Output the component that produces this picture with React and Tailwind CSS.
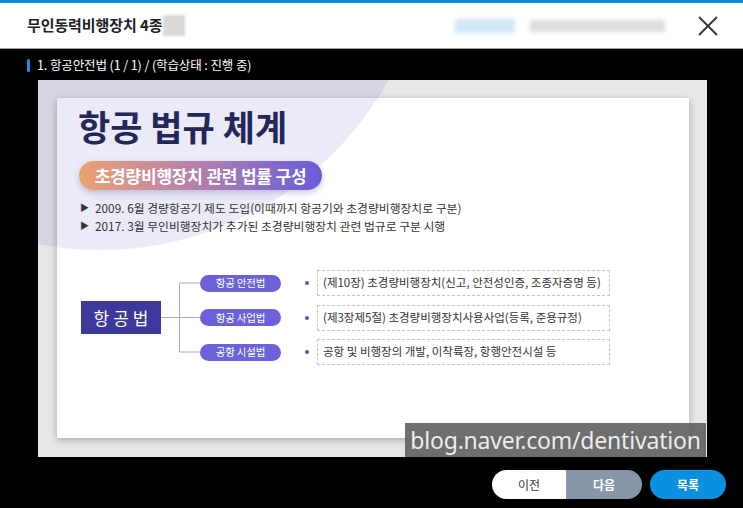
import React from 'react';

const LAWS = [
  { name: '항공 안전법', desc: '(제10장) 초경량비행장치(신고, 안전성인증, 조종자증명 등)' },
  { name: '항공 사업법', desc: '(제3장제5절) 초경량비행장치사용사업(등록, 준용규정)' },
  { name: '공항 시설법', desc: '공항 및 비행장의 개발, 이착륙장, 항행안전시설 등' },
];

const BULLETS = [
  '2009. 6월 경량항공기 제도 도입(이때까지 항공기와 초경량비행장치로 구분)',
  '2017. 3월 무인비행장치가 추가된 초경량비행장치 관련 법규로 구분 시행',
];

function Connector() {
  return (
    <svg width="39" height="95" viewBox="0 0 39 95" className="shrink-0">
      <g stroke="#a9a6dc" strokeWidth="1" fill="none">
        <path d="M0 47.5H39" />
        <path d="M18.5 13V82" />
        <path d="M18.5 13H39" />
        <path d="M18.5 82H39" />
      </g>
    </svg>
  );
}

export default function App() {
  return (
    <div className="w-[743px] h-[508px] bg-black flex flex-col overflow-hidden font-['Noto_Sans_CJK_KR','Noto_Sans',sans-serif]">
      {/* header */}
      <div className="h-[3px] bg-[#0a8ad6]" />
      <header className="h-[46px] bg-white border-b border-[#9c9c9c] flex items-center pl-[27px] pr-[25px]">
        <h1 className="text-[15px] font-bold text-[#222] tracking-[-0.1px]">무인동력비행장치 4종</h1>
        <div className="w-[22px] h-[21px] bg-[#d9d9d9] blur-[1px] ml-[1px]" />
        <div className="ml-auto flex items-center">
          <div className="w-[60px] h-[14px] bg-[#cfe6f5] blur-[2px]" />
          <div className="w-[135px] h-[12px] bg-[#dcdcdc] blur-[2px] ml-[15px]" />
          <svg width="20" height="20" viewBox="0 0 20 20" className="ml-[33px]">
            <path d="M1 1L19 19M19 1L1 19" stroke="#333" strokeWidth="1.8" />
          </svg>
        </div>
      </header>

      {/* lesson title */}
      <div className="h-[31px] flex items-center pl-[27px] pt-[1px]">
        <span className="w-[3px] h-[13px] rounded-full bg-[#1a8fe3]" />
        <span className="ml-[7px] text-white text-[12.5px] tracking-[-0.1px]">1. 항공안전법 (1 / 1) / (학습상태 : 진행 중)</span>
      </div>

      {/* slide */}
      <div className="relative ml-[38px] w-[669px] h-[377px] bg-[#e7e7e8] overflow-hidden pt-[18px] pl-[19px]">
        <div className="absolute left-[-268px] top-[-490px] w-[660px] h-[660px] rounded-full bg-[#d5d6e2]" />
        <div className="relative w-[632px] h-[340px] bg-white overflow-hidden shadow-[0_2px_7px_rgba(0,0,0,0.28)]">
          <div className="absolute left-[-287px] top-[-508px] w-[660px] h-[660px] rounded-full bg-[#eaebf7]" />
          <div className="relative pl-[21px] pt-[8px]">
            <h2 className="text-[35px] leading-[40px] font-bold text-[#24265c]">항공 법규 체계</h2>
            <div className="mt-[15px] ml-[1px] w-[243px] h-[29px] rounded-full bg-gradient-to-r from-[#eba36d] via-[#b27eae] to-[#6a5ad8] flex items-center justify-center shadow-[0_3px_6px_rgba(90,80,160,0.3)]">
              <span className="text-white text-[17px] font-bold tracking-[-0.2px]">초경량비행장치 관련 법률 구성</span>
            </div>
            <ul className="mt-[9px] ml-[2px] text-[11.8px] leading-[18px] text-[#333]">
              {BULLETS.map((b) => (
                <li key={b} className="flex items-center">
                  <span className="text-[9px] mr-[6px] text-[#333]">▶</span>
                  {b}
                </li>
              ))}
            </ul>

            {/* law diagram */}
            <div className="mt-[35px] ml-[3px] flex items-center">
              <div className="w-[80px] h-[33px] bg-[#3c389c] flex items-center justify-center">
                <span className="text-white text-[17px] tracking-[4px] pl-[4px]">항공법</span>
              </div>
              <Connector />
              <div className="flex flex-col gap-[8.5px]">
                {LAWS.map((l) => (
                  <div key={l.name} className="h-[26px] flex items-center">
                    <div className="w-[81px] h-[17px] rounded-full bg-[#6a62d6] flex items-center justify-center">
                      <span className="text-white text-[10.5px] tracking-[-0.2px]">{l.name}</span>
                    </div>
                    <span className="ml-[24px] w-[4px] h-[4px] rounded-full bg-[#5753c9]" />
                    <div className="ml-[8px] w-[293px] h-[26px] border border-dashed border-[#c4c4c4] flex items-center pl-[5px]">
                      <span className="text-[11.5px] text-[#333]">{l.desc}</span>
                    </div>
                  </div>
                ))}
              </div>
            </div>
          </div>
        </div>
        <div className="absolute right-[1px] bottom-0 w-[301px] h-[34px] bg-[#5f5f5f]/90 flex items-center justify-center">
          <span className="text-[#ececec] text-[23px] font-['Noto_Sans',sans-serif] tracking-[-0.2px]">blog.naver.com/dentivation</span>
        </div>
      </div>

      {/* buttons */}
      <div className="flex justify-end pt-[13px] pr-[17px]">
        <div className="flex h-[29px] rounded-full overflow-hidden">
          <button className="w-[74px] bg-white text-[12px] text-[#333]">이전</button>
          <button className="w-[76px] bg-[#8796a9] text-[12px] text-white font-bold">다음</button>
        </div>
        <button className="ml-[8px] w-[76px] h-[29px] rounded-full bg-[#0a90e0] text-[12px] text-white font-bold">목록</button>
      </div>
    </div>
  );
}
